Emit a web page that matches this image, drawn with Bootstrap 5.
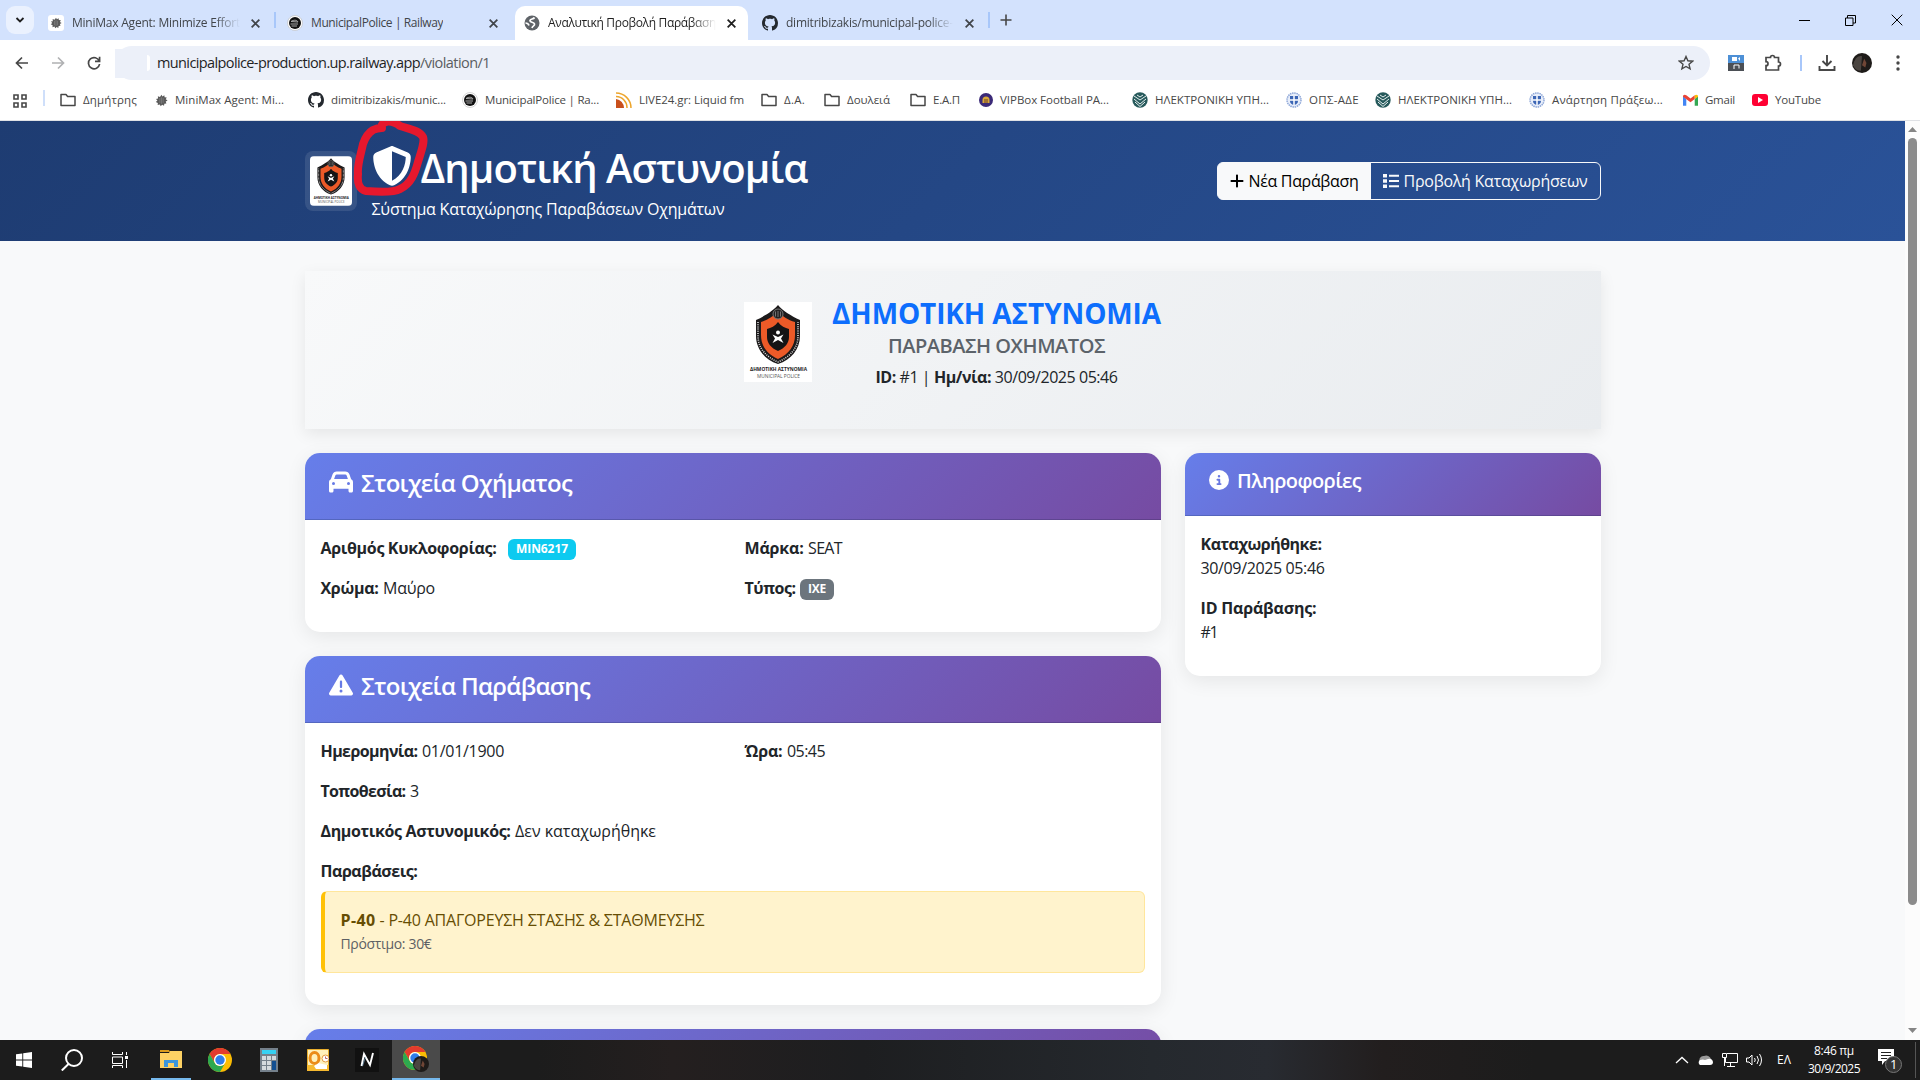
<!DOCTYPE html>
<html lang="el">
<head>
<meta charset="utf-8">
<meta name="viewport" content="width=device-width, initial-scale=1">
<title>Αναλυτική Προβολή Παράβασης</title>
<link href="https://cdn.jsdelivr.net/npm/bootstrap@5.3.0/dist/css/bootstrap.min.css" rel="stylesheet">
<style>
body{font-family:"Open Sans","Noto Sans",sans-serif;width:1920px;height:1080px;overflow:hidden;background:#fff}
svg{flex:none;display:block}
[data-w]{display:inline-block;white-space:nowrap}
/* browser chrome */
.tabstrip{height:40px;background:#d3e2fd;padding-left:6px;font-size:12px;color:#41454a}
.tabmenu{width:28px;height:28px;border-radius:9px;background:#eaf1fe}
.tab-item{height:34px;margin-top:6px;padding-left:9px}
.tab-item .tab-label{overflow:hidden;height:18px;line-height:18px}
.tab-fade{-webkit-mask-image:linear-gradient(90deg,#000 85%,transparent)}
.t1{width:240px;padding-left:14px}.t2{width:239px;padding-left:11px}
.t3{width:233px;background:#fff;border-radius:10px 10px 0 0;color:#1f1f1f}
.t4{width:240px;padding-left:14px}
.tab-x{width:11px;margin-right:11px}.t1 .tab-x,.t4 .tab-x{margin-right:13px}.t2 .tab-x{margin-right:16px}
.tab-sep{width:2px;height:16px;background:#a8c7fa}
.tab-plus{margin-left:10px}
.winbtns{gap:35px;margin-right:17px}
.toolbar{height:46px;color:#474747}
.navbtns{width:115px;padding-left:14px;gap:20px}
.omnibox{width:1595px;height:34px;background:#ecf0f9;border-radius:17px;font-size:14.5px;padding:0 16px 0 42px;color:#1f1f1f}
.omnibox .path-part{color:#5a5d61}
.omni-edge{width:20px;height:29px;background:#ecf0f9;margin-right:-20px}
.omni-mark{width:3px;height:16px;border-radius:0 3px 3px 0;background:#fff;margin:0 7px 0 -10px}
.toolicons{padding-left:18px;width:210px}
.bookmarks{height:34px;padding-top:4px;font-size:11.5px;color:#474747}
.bm{height:20px;gap:7px;line-height:20px}
.bmark-line{height:1px;background:#dfe1e5}
.apps{width:43px;padding-left:13px}
.bm-sep{width:2px;height:16px;background:#cfdffa;margin-right:15px}
.w95{width:95px}.w153{width:153px}.w154{width:154px}.w145{width:145px}.w63{width:63px}.w86{width:86px}.w69{width:69px}.w89{width:89px}
/* page */
.viewport{height:919px;background:#fff}
.page{width:1905px;background:#f8f9fa;overflow:hidden}
.site-header{height:120px;padding:20px 0;background:linear-gradient(135deg,#1e3c72 0%,#2a5298 100%);color:#fff}
.site-header .container,.page .container{max-width:1320px}
.crest-frame{width:52px;height:60px;padding:5px;border-radius:8px;background:rgba(255,255,255,.1);margin-right:15px}
.site-header h1{font-size:40px;line-height:48px;font-weight:650}
.site-header h1>[data-w]{padding-top:3px;height:48px}
.shield-wrap{position:relative;width:40px;height:40px;margin-right:9px}
.shield-wrap svg:first-child{margin-top:1px}
.scribble{position:absolute;left:-22px;top:-29px;overflow:visible}
.site-header .btn{font-size:16px;height:38px;line-height:24px;gap:4px}
.summary{margin-top:30px;height:158px;padding:24px;background:linear-gradient(135deg,#f8f9fa,#e9ecef);box-shadow:0 5px 15px rgba(0,0,0,.08);margin-bottom:24px}
.summary h3{font-size:28px;line-height:33.6px;height:33.6px;padding-top:1.5px}
.summary h5{color:#5c636a;font-weight:600;height:24px;padding-top:1px}
.sheet{border:0;border-radius:15px;box-shadow:0 5px 20px rgba(0,0,0,.08);overflow:hidden;margin-bottom:24px}
.sheet .card-header{background:linear-gradient(135deg,#667eea 0%,#764ba2 100%);color:#fff;padding:15px 24px 14.2px}
.sheet h4,.sheet h5{font-weight:600;line-height:1.2;display:flex;align-items:center;gap:8.500px;margin-bottom:8px}
.sheet h4{font-size:24px;height:28.8px}
.sheet h5{height:24.8px}
.sheet h4 svg{margin-top:-1px}
.sheet h4 [data-w],.sheet h5 [data-w]{padding-top:2px}
.sheet p{height:24px;margin-bottom:16px;display:flex;gap:4.500px}
.sheet .badge{font-size:12px;height:21px;line-height:12px;padding:4.5px 8px;margin-top:3px;border-radius:6px}
.sheet .plate{margin-left:7px}
.fine{border:1px solid #ffe69c;border-left:4px solid #ffc107;background:#fff3cd;color:#664d03;padding:16px;height:82px;border-radius:6px}
.fine small{font-size:14px;color:#5d6064;padding-top:1px}
.scrollrail{width:15px;background:#fcfcfc}
.scrollthumb{width:9px;height:767px;border-radius:5px;background:#8b8b8b}
/* taskbar */
.taskbar{height:40px;color:#fff;background:linear-gradient(90deg,#1c1c1c 0,#1c1c1c 28%,#241f1f 35%,#1d1e20 45%,#25292e 60%,#282b31 66%,#221e1e 72%,#1c1c1c 80%)}
.task{width:48px;height:40px}
.task-slim~.task{margin-right:1px}
.task.running{border-bottom:2px solid #76b9ed}
.task-slim{width:40px;margin:0 5px 0 7px}
.task.active{background:#4a4a4a}
.tray{font-size:12px;gap:8px;padding-right:4px}
.clock{width:62px;line-height:18px;font-size:12px}
.lang{margin-left:6px}
</style>
<script src="https://cdn.jsdelivr.net/npm/bootstrap@5.3.0/dist/js/bootstrap.bundle.min.js"></script>
</head>
<body class="d-flex flex-column">
<svg width="0" height="0" class="position-absolute">
<defs>
<symbol id="x" viewBox="0 0 10 10"><path d="M1.500 1.500l7 7M8.500 1.500l-7 7" stroke="currentColor" stroke-width="1.600"/></symbol>
<symbol id="minimax" viewBox="0 0 16 16"><path d="M8 1l1.200 2L11.500 1.500l.3 2.600 2.700.2-1.300 2.200L15.500 8l-2.300 1.300.8 2.500-2.500.1-.4 2.600-2.300-1.300L7 15l-1-2.200-2.700.7.200-2.500L1 9.700l2-1.600L1.200 6l2.600-.5-.3-2.700 2.600 1z" fill="#5a5a5a"/><path d="M6 5v6M8 4v8M10 5v6" stroke="#888" stroke-width=".8"/></symbol>
<symbol id="railway" viewBox="0 0 16 16"><circle cx="8" cy="8" r="7.500" fill="#fff" stroke="#bbb" stroke-width=".6"/><circle cx="8" cy="8" r="6" fill="#111"/><path d="M4 6.500c3-2 6-1.500 7 .5zM3.500 9H11M4.500 11H10" stroke="#aaa" stroke-width="1" fill="none"/></symbol>
<symbol id="github" viewBox="0 0 16 16"><path fill="#24292f" d="M8 0C3.580 0 0 3.580 0 8c0 3.540 2.290 6.530 5.470 7.590.4.070.55-.17.55-.38 0-.19-.01-.82-.01-1.490-2.010.37-2.530-.49-2.690-.94-.09-.23-.48-.94-.82-1.130-.28-.15-.68-.52-.01-.53.63-.01 1.080.58 1.230.82.72 1.210 1.870.87 2.330.66.070-.52.28-.87.510-1.070-1.780-.2-3.640-.89-3.640-3.950 0-.87.310-1.590.82-2.150-.08-.2-.36-1.020.08-2.120 0 0 .67-.21 2.200.82.64-.18 1.320-.27 2-.27s1.360.090 2 .27c1.530-1.040 2.200-.82 2.200-.82.44 1.100.16 1.920.08 2.120.51.56.82 1.270.82 2.150 0 3.070-1.870 3.750-3.650 3.950.29.25.54.73.54 1.480 0 1.070-.01 1.930-.01 2.200 0 .21.150.46.550.38A8.010 8.010 0 0 0 16 8c0-4.420-3.580-8-8-8z"/></symbol>
<symbol id="folder" viewBox="0 0 16 16"><path d="M1 13.500V2.500h5l1.600 2H15v9z" fill="none" stroke="#474747" stroke-width="1.500" stroke-linejoin="round"/></symbol>
<symbol id="hlek" viewBox="0 0 16 16"><circle cx="8" cy="8" r="7.700" fill="#275a5c"/><path d="M2 4l6 4 6-4M2 7l6 5 6-5M3 10l5 4.500L13 10M5 3l3 2 3-2" stroke="#e6efef" stroke-width="1" fill="none"/></symbol>
<symbol id="greece" viewBox="0 0 16 16"><circle cx="8" cy="8" r="7" fill="#e8eefa" stroke="#8ea7d8" stroke-width="1.500" stroke-dasharray="1.500 .7"/><path d="M4 4h8v5q0 3-4 4-4-1-4-4z" fill="#3c66b5"/><path d="M8 4v9M4 8h8" stroke="#fff" stroke-width="1.500"/></symbol>
<symbol id="crest" viewBox="0 0 68 80"><path fill="#fff" d="M0 0h68v80H0z"/><path d="M34 3C38 8 47 14 56 18V34C56 47 47 58 34 62 21 58 12 47 12 34V18C21 14 30 8 34 3z" fill="#1c1a1b"/><path d="M14 20v14c0 12 8 21 20 26 12-5 20-14 20-26V20" fill="none" stroke="#ddd" stroke-width="1.600" stroke-dasharray="1 1.200"/><path d="M34 9c4 5 10 9 17 11v13c0 11-6 19-17 24-11-5-17-13-17-24V20c7-2 13-6 17-11z" fill="#ec5a28"/><circle cx="34" cy="12" r="5" fill="#222" stroke="#777"/><path d="M31.500 9.500v5M34 9v6M36.500 9.500v5" stroke="#888" stroke-width=".8"/><path d="M34 20c3 4 7 6 11 7v8c0 6-4 11-11 14-7-3-11-8-11-14v-8c4-1 8-3 11-7z" fill="#151415"/><circle cx="34" cy="30.500" r="2" fill="#fff"/><path d="M28.500 32.500L34 35l5.500-2.500-2.500 4 2.500 4.500L34 38l-5.500 3 2.500-4.500z" fill="#fff"/><text x="6" y="69" font-size="5.300" font-weight="700" textLength="57" lengthAdjust="spacingAndGlyphs" fill="#222">ΔΗΜΟΤΙΚΗ ΑΣΤΥΝΟΜΙΑ</text><text x="13" y="75.800" font-size="5" textLength="43" lengthAdjust="spacingAndGlyphs" fill="#555">MUNICIPAL POLICE</text></symbol>
<symbol id="chrome" viewBox="0 0 24 24"><circle cx="12" cy="12" r="12" fill="#fbbc04"/><path d="M1.600 6A12 12 0 0 1 22.400 6H12a6 6 0 0 0-5.200 9z" fill="#e33b2e"/><path d="M1.600 6A12 12 0 0 0 12 24l5.200-9A6 6 0 0 1 6.800 15z" fill="#2da94f"/><circle cx="12" cy="12" r="6" fill="#fff"/><circle cx="12" cy="12" r="4.700" fill="#2f7de9"/></symbol>
<symbol id="avatar" viewBox="0 0 18 18"><circle cx="9" cy="9" r="9" fill="#1e1b19"/><path d="M1 11C2 5 6 2 9 3L8 16Q3 16 1 11z" fill="#4b4541"/><path d="M11 5l2 4-1 4-3-2z" fill="#704636"/></symbol>
</defs></svg>

<div class="tabstrip d-flex flex-shrink-0">
  <div class="tabmenu d-flex align-items-center justify-content-center align-self-center"><svg width="10" height="8" viewBox="0 0 10 8"><path d="M1.500 2L5 5.500 8.500 2" fill="none" stroke="#1f1f1f" stroke-width="1.800"/></svg></div>
  <div class="tab-item t1 d-flex align-items-center"><svg width="16" height="16"><rect width="16" height="16" rx="3" fill="#fff"/><use href="#minimax" x="2" y="2" width="12" height="12"/></svg><div class="tab-label tab-fade ms-2"><span data-w="168">MiniMax Agent: Minimize Effort</span></div><svg class="tab-x ms-auto" height="11"><use href="#x"/></svg></div>
  <div class="tab-sep align-self-center"></div>
  <div class="tab-item t2 d-flex align-items-center"><svg width="16" height="16"><use href="#railway"/></svg><div class="tab-label ms-2"><span data-w="132">MunicipalPolice | Railway</span></div><svg class="tab-x ms-auto" height="11"><use href="#x"/></svg></div>
  <div class="tab-item t3 d-flex align-items-center"><svg width="16" height="16" viewBox="0 0 16 16"><circle cx="8" cy="8" r="7.500" fill="#5f6368"/><path d="M10.500 2.500c-1 2-4 1-4.500 3s4 1.500 4.500 3.500-2 1.500-2.500 4M1.500 8c2 0 3 1 3.500 2.500" stroke="#fff" stroke-width="1.700" fill="none"/></svg><div class="tab-label tab-fade ms-2"><span data-w="168">Αναλυτική Προβολή Παράβαση</span></div><svg class="tab-x ms-auto" height="11"><use href="#x"/></svg></div>
  <div class="tab-item t4 d-flex align-items-center"><svg width="16" height="16"><use href="#github"/></svg><div class="tab-label tab-fade ms-2"><span data-w="167">dimitribizakis/municipal-police-</span></div><svg class="tab-x ms-auto" height="11"><use href="#x"/></svg></div>
  <div class="tab-sep align-self-center"></div>
  <svg class="tab-plus align-self-center" width="12" height="12" viewBox="0 0 12 12"><path d="M6 .5v11M.5 6h11" stroke="#474747" stroke-width="1.600"/></svg>
  <div class="winbtns d-flex align-items-center ms-auto">
    <svg width="11" height="11"><path d="M0 5.500h11" stroke="#000"/></svg>
    <svg width="11" height="11"><path d="M.5 3h7.500v7.500H.5zM2.500 3V.5h8V8H8" fill="none" stroke="#000"/></svg>
    <svg width="12" height="12"><path d="M.7.7l10.600 10.600M11.300.7L.7 11.300" stroke="#000"/></svg>
  </div>
</div>

<div class="toolbar d-flex align-items-center flex-shrink-0">
  <div class="navbtns d-flex align-items-center">
    <svg width="16" height="16" viewBox="0 0 16 16" fill="none" stroke="#474747" stroke-width="1.700"><path d="M14 8H2.500M8 2.500L2.500 8 8 13.500"/></svg>
    <svg width="16" height="16" viewBox="0 0 16 16" fill="none" stroke="#b0b1b3" stroke-width="1.700"><path d="M2 8h11.500M8 2.500L13.500 8 8 13.500"/></svg>
    <svg width="16" height="16" viewBox="0 0 16 16" fill="none" stroke="#474747" stroke-width="1.700"><path d="M13.300 6.200A5.600 5.600 0 1 0 13.600 9M13.600 1.800v4.600H9"/></svg>
  </div>
  <div class="omni-edge"></div>
  <div class="omnibox d-flex align-items-center"><i class="omni-mark"></i><span data-w="263">municipalpolice-production.up.railway.app</span><span class="path-part" data-w="70">/violation/1</span>
    <svg class="ms-auto" width="16" height="16" viewBox="0 0 16 16"><path d="M8 1.500l1.900 4.300 4.700.4-3.600 3.100 1.100 4.600L8 11.500l-4.100 2.400L5 9.300 1.400 6.200l4.700-.4z" fill="none" stroke="#474747" stroke-width="1.400"/></svg></div>
  <div class="toolicons d-flex align-items-center">
    <svg width="16" height="16"><path fill="#4d90d6" d="M0 0h16v8H0z"/><path fill="#4b4f55" d="M0 8h16v8H0z"/><path d="M4 2h5v4H4zM10 3.500L12 2v4z" fill="#fff"/><path d="M6 14v-4h5v3.500" stroke="#fff" fill="none"/></svg>
    <svg class="ms-3" width="24" height="18" viewBox="0 0 24 18"><path d="M6 3.500h4.500a2 2 0 0 1 4 0h4V8a2 2 0 0 1 0 4v4H6v-4.300a2 2 0 0 0 0-4z" fill="none" stroke="#474747" stroke-width="1.700"/></svg>
    <div class="tab-sep ms-3"></div>
    <svg class="ms-3" width="18" height="18" viewBox="0 0 18 18"><path d="M9 1v10M4.500 7L9 11.500 13.500 7M1.500 12v4h15v-4" fill="none" stroke="#474747" stroke-width="1.900"/></svg>
    <svg class="ms-3" width="20" height="20"><use href="#avatar"/></svg>
    <svg class="ms-auto me-3" width="12" height="16"><g fill="#474747"><circle cx="6" cy="2" r="1.700"/><circle cx="6" cy="8" r="1.700"/><circle cx="6" cy="14" r="1.700"/></g></svg>
  </div>
</div>

<div class="bookmarks d-flex align-items-start flex-shrink-0">
  <div class="apps"><svg class="mt-1" width="14" height="14" viewBox="0 0 14 14"><path d="M1 1h4v4H1zM9 1h4v4H9zM1 9h4v4H1zM9 9h4v4H9z" fill="none" stroke="#474747" stroke-width="1.600"/></svg></div>
  <div class="bm-sep"></div>
  <div class="bm w95 d-flex align-items-center"><svg width="16" height="16"><use href="#folder"/></svg><span data-w="54">Δημήτρης</span></div>
  <div class="bm w153 d-flex align-items-center"><svg width="13" height="13"><use href="#minimax"/></svg><span data-w="109">MiniMax Agent: Mi...</span></div>
  <div class="bm w154 d-flex align-items-center"><svg width="16" height="16"><use href="#github"/></svg><span data-w="115">dimitribizakis/munic...</span></div>
  <div class="bm w154 d-flex align-items-center"><svg width="16" height="16"><use href="#railway"/></svg><span data-w="114">MunicipalPolice | Ra...</span></div>
  <div class="bm w145 d-flex align-items-center"><svg width="16" height="16" viewBox="0 0 16 16"><path d="M0 7a9 9 0 0 1 8 9H0z" fill="#c9501c"/><path d="M0 4.500A11 11 0 0 1 11 16M0 1a15 15 0 0 1 15 15" stroke="#eda52c" stroke-width="1.500" fill="none"/></svg><span data-w="105">LIVE24.gr: Liquid fm</span></div>
  <div class="bm w63 d-flex align-items-center"><svg width="16" height="16"><use href="#folder"/></svg><span data-w="21">Δ.Α.</span></div>
  <div class="bm w86 d-flex align-items-center"><svg width="16" height="16"><use href="#folder"/></svg><span data-w="43">Δουλειά</span></div>
  <div class="bm w69 d-flex align-items-center"><svg width="16" height="16"><use href="#folder"/></svg><span data-w="27">Ε.Α.Π</span></div>
  <div class="bm w153 d-flex align-items-center"><svg width="14" height="14" viewBox="0 0 14 14"><circle cx="7" cy="7" r="7" fill="#3b2a78"/><path d="M3.500 7a3.500 3.500 0 0 1 7 0v3h-7z" fill="#d9a93a"/><path d="M5 7h4M5 9h4" stroke="#6b3b2b"/></svg><span data-w="109">VIPBox Football PA...</span></div>
  <div class="bm w154 d-flex align-items-center"><svg width="16" height="16"><use href="#hlek"/></svg><span data-w="114">ΗΛΕΚΤΡΟΝΙΚΗ ΥΠΗ...</span></div>
  <div class="bm w89 d-flex align-items-center"><svg width="16" height="16"><use href="#greece"/></svg><span data-w="50">ΟΠΣ-ΑΔΕ</span></div>
  <div class="bm w154 d-flex align-items-center"><svg width="16" height="16"><use href="#hlek"/></svg><span data-w="114">ΗΛΕΚΤΡΟΝΙΚΗ ΥΠΗ...</span></div>
  <div class="bm w154 d-flex align-items-center"><svg width="16" height="16"><use href="#greece"/></svg><span data-w="111">Ανάρτηση Πράξεω...</span></div>
  <div class="bm w69 d-flex align-items-center"><svg width="15" height="12" viewBox="0 0 16 12"><path d="M0 1.500V12h3.500V5z" fill="#4285f4"/><path d="M16 1.500V12h-3.500V5z" fill="#34a853"/><path d="M0 1.500Q1.500-.5 3.500 1L8 4.500 12.500 1v4L8 8.500 0 2.500z" fill="#ea4335"/><path d="M12.500 1Q14.500-.5 16 1.500v1L12.500 5z" fill="#fbbc04"/></svg><span data-w="30">Gmail</span></div>
  <div class="bm d-flex align-items-center"><svg width="16" height="12"><rect width="16" height="12" rx="3" fill="#f03"/><path d="M6 3l5 3-5 3z" fill="#fff"/></svg><span data-w="46">YouTube</span></div>
</div>
<div class="bmark-line flex-shrink-0"></div>

<div class="viewport d-flex flex-shrink-0">
  <div class="page">
    <header class="site-header">
      <div class="container d-flex align-items-center justify-content-between">
        <div class="d-flex align-items-center">
          <div class="crest-frame"><svg class="rounded-1" width="42" height="50"><use href="#crest"/></svg></div>
          <div>
            <h1 class="d-flex align-items-center mb-2"><span class="shield-wrap"><svg width="40" height="40" viewBox="0 0 512 512" fill="#fff"><path d="M256 0c4.600 0 9.200 1 13.400 2.900L457.700 82.800c22 9.300 38.400 31 38.300 57.200c-.5 99.200-41.300 280.700-213.600 363.200c-16.700 8-36.100 8-52.800 0C57.300 420.700 16.500 239.200 16 140c-.1-26.200 16.300-47.900 38.300-57.200L242.700 2.900C246.800 1 251.400 0 256 0zm0 66.800V444.800C394 378 431.100 230.100 432 141.400L256 66.800z"/></svg><svg class="scribble" width="80" height="82" viewBox="0 0 80 82"><path d="M32 12C29 12 25 13 23 14 18 17 15 22 13 28 11 38 7 49 8 58 7 68 10 74 16 75 28 76 43 77 50 73 61 68 65 57 68 46 71 36 75 26 73 21 69 14 59 13 50 10 42 4 33 4 31 11" fill="none" stroke="#e6182d" stroke-width="8" stroke-linecap="round" stroke-linejoin="round"/></svg></span><span data-w="387">Δημοτική Αστυνομία</span></h1>
            <p class="mb-0"><span data-w="353">Σύστημα Καταχώρησης Παραβάσεων Οχημάτων</span></p>
          </div>
        </div>
        <div class="btn-group">
          <a class="btn btn-light d-flex align-items-center" href="#"><svg width="14" height="16" viewBox="0 0 448 512" fill="currentColor"><path d="M256 80c0-17.700-14.300-32-32-32s-32 14.300-32 32V224H48c-17.700 0-32 14.300-32 32s14.300 32 32 32H192V432c0 17.700 14.300 32 32 32s32-14.300 32-32V288H400c17.700 0 32-14.300 32-32s-14.300-32-32-32H256V80z"/></svg><span data-w="110">Νέα Παράβαση</span></a>
          <a class="btn btn-outline-light d-flex align-items-center" href="#"><svg width="16" height="16" viewBox="0 0 16 16" fill="currentColor"><path d="M0 1h4v3.500H0zM0 6.300h4v3.500H0zM0 11.600h4V15H0zM6 1.800h10v2H6zM6 7h10v2H6zM6 12.300h10v2H6z"/></svg><span data-w="184">Προβολή Καταχωρήσεων</span></a>
        </div>
      </div>
    </header>

    <main class="container">
      <section class="summary d-flex justify-content-center align-items-start">
        <div class="d-flex align-items-center">
          <svg width="68" height="80"><use href="#crest"/></svg>
          <div class="text-center ps-1 ms-3">
            <h3 class="text-primary fw-bold mb-1"><span data-w="329">ΔΗΜΟΤΙΚΗ ΑΣΤΥΝΟΜΙΑ</span></h3>
            <h5 class="mb-2"><span data-w="217">ΠΑΡΑΒΑΣΗ ΟΧΗΜΑΤΟΣ</span></h5>
            <p class="mb-0"><span data-w="242"><strong>ID:</strong> #1 | <strong>Ημ/νία:</strong> 30/09/2025 05:46</span></p>
          </div>
        </div>
      </section>

      <div class="row">
        <div class="col-8">
          <div class="card sheet">
            <div class="card-header"><h4><svg width="24" height="24" viewBox="0 0 512 512" fill="#fff"><path d="M135.200 117.400L109.100 192H402.900l-26.100-74.600C372.300 104.600 360.200 96 346.600 96H165.400c-13.600 0-25.700 8.600-30.200 21.400zM39.600 196.800L74.800 96.300C88.300 57.800 124.600 32 165.400 32H346.600c40.800 0 77.100 25.800 90.600 64.300l35.200 100.500c23.200 9.600 39.600 32.500 39.600 59.200V400v48c0 17.700-14.300 32-32 32H448c-17.700 0-32-14.300-32-32V400H96v48c0 17.700-14.300 32-32 32H32c-17.700 0-32-14.300-32-32V400 256c0-26.700 16.400-49.600 39.600-59.200zM128 288a32 32 0 1 0 -64 0 32 32 0 1 0 64 0zm288 32a32 32 0 1 0 0-64 32 32 0 1 0 0 64z"/></svg><span data-w="211">Στοιχεία Οχήματος</span></h4></div>
            <div class="card-body">
              <div class="row">
                <div class="col-6"><p><strong data-w="176">Αριθμός Κυκλοφορίας:</strong><span class="badge bg-info plate"><span data-w="52">MIN6217</span></span></p><p><strong data-w="58">Χρώμα:</strong><span data-w="52">Μαύρο</span></p></div>
                <div class="col-6"><p><strong data-w="59">Μάρκα:</strong><span data-w="34">SEAT</span></p><p><strong data-w="51">Τύπος:</strong><span class="badge bg-secondary"><span data-w="18">ΙΧΕ</span></span></p></div>
              </div>
            </div>
          </div>

          <div class="card sheet">
            <div class="card-header"><h4><svg width="24" height="24" viewBox="0 0 512 512" fill="#fff"><path d="M256 32c14.200 0 27.300 7.500 34.500 19.800l216 368c7.300 12.400 7.300 27.700 .2 40.100S486.300 480 472 480H40c-14.300 0-27.600-7.700-34.700-20.100s-7-27.800 .2-40.100l216-368C228.700 39.500 241.800 32 256 32zm0 128c-13.300 0-24 10.700-24 24V296c0 13.300 10.700 24 24 24s24-10.700 24-24V184c0-13.300-10.700-24-24-24zm32 224a32 32 0 1 0 -64 0 32 32 0 1 0 64 0z"/></svg><span data-w="229">Στοιχεία Παράβασης</span></h4></div>
            <div class="card-body">
              <div class="row">
                <div class="col-6"><p><strong data-w="97">Ημερομηνία:</strong><span data-w="82">01/01/1900</span></p></div>
                <div class="col-6"><p><strong data-w="38">Ώρα:</strong><span data-w="38">05:45</span></p></div>
              </div>
              <p><strong data-w="85">Τοποθεσία:</strong><span>3</span></p>
              <p><strong data-w="190">Δημοτικός Αστυνομικός:</strong><span data-w="141">Δεν καταχωρήθηκε</span></p>
              <p class="mb-2"><strong data-w="97">Παραβάσεις:</strong></p>
              <div class="fine mb-3">
                <div class="d-flex gap-1"><strong data-w="35">P-40</strong><span data-w="325">- P-40 ΑΠΑΓΟΡΕΥΣΗ ΣΤΑΣΗΣ &amp; ΣΤΑΘΜΕΥΣΗΣ</span></div>
                <small class="d-block"><span data-w="91">Πρόστιμο: 30€</span></small>
              </div>
            </div>
          </div>

          <div class="card sheet"><div class="card-header"><h4>&nbsp;</h4></div></div>
        </div>

        <div class="col-4">
          <div class="card sheet">
            <div class="card-header"><h5><svg width="20" height="20" viewBox="0 0 512 512" fill="#fff"><path d="M256 512A256 256 0 1 0 256 0a256 256 0 1 0 0 512zM216 336h24V272H216c-13.300 0-24-10.700-24-24s10.700-24 24-24h48c13.300 0 24 10.700 24 24v88h8c13.300 0 24 10.700 24 24s-10.700 24-24 24H216c-13.300 0-24-10.700-24-24s10.700-24 24-24zm40-208a32 32 0 1 1 0 64 32 32 0 1 1 0-64z"/></svg><span data-w="124">Πληροφορίες</span></h5></div>
            <div class="card-body">
              <p class="mb-0"><strong data-w="121">Καταχωρήθηκε:</strong></p>
              <p><span data-w="124">30/09/2025 05:46</span></p>
              <p class="mb-0"><strong data-w="116">ID Παράβασης:</strong></p>
              <p><span data-w="17">#1</span></p>
            </div>
          </div>
        </div>
      </div>
    </main>
  </div>
  <div class="scrollrail d-flex flex-column align-items-center">
    <svg width="9" height="17"><path d="M0 11h9L4.500 6z" fill="#858585"/></svg>
    <div class="scrollthumb"></div>
    <svg class="mt-auto" width="9" height="14"><path d="M0 2h9L4.500 7z" fill="#858585"/></svg>
  </div>
</div>

<footer class="taskbar d-flex align-items-center flex-shrink-0">
  <div class="task d-flex align-items-center justify-content-center"><svg width="16" height="16" viewBox="0 0 16 16" fill="#fff"><path d="M0 2.200L6.300 1.400V7.500H0zM7.200 1.200L16 0v7.500H7.200zM0 8.500h6.300v6.100L0 13.800zM7.200 8.500H16V16l-8.800-1.200z"/></svg></div>
  <div class="task d-flex align-items-center justify-content-center"><svg width="22" height="22" viewBox="0 0 22 22" fill="none" stroke="#fff" stroke-width="2"><circle cx="13" cy="9" r="8"/><path d="M7.500 15L.8 21.500"/></svg></div>
  <div class="task d-flex align-items-center justify-content-center"><svg width="16" height="16" viewBox="0 0 16 16" fill="none" stroke="#fff"><path d="M.5 0v2.500h10V0M.5 5h10v6.500H.5zM.5 16v-2.500h10V16M14.500 0v3M14.500 8v8"/><path d="M13 4h3v3h-3z" fill="#fff" stroke="none"/></svg></div>
  <div class="task task-slim running d-flex align-items-center justify-content-center"><svg width="22" height="18" viewBox="0 0 22 18"><path d="M0 0h9l1 2H0z" fill="#d99b1d"/><path d="M0 3h9l1-2h12v17H0z" fill="#fdd264"/><path d="M4 17v-7h14v7h-4v-4H8v4z" fill="#3c96dc"/></svg></div>
  <div class="task d-flex align-items-center justify-content-center"><svg width="24" height="24"><use href="#chrome"/></svg></div>
  <div class="task d-flex align-items-center justify-content-center"><svg width="18" height="24" viewBox="0 0 18 24"><path fill="#74808b" d="M0 0h18v24H0z"/><path fill="#36d1f3" d="M2 2h14v4H2z"/><path fill="#d4dade" d="M2 8h4v4H2zM7 8h4v4H7zM12 8h4v4h-4zM2 13h4v4H2zM7 13h4v4H7zM2 18h4v4H2zM7 18h4v4H7z"/><path fill="#134f91" d="M12 13h4v9h-4z"/></svg></div>
  <div class="task d-flex align-items-center justify-content-center"><svg width="22" height="22" viewBox="0 0 22 22"><path fill="#fff0ba" stroke="#e9ae2d" d="M.5.5h21v21H.5z"/><path d="M0 16h22v6H0z" fill="#f6b92f"/><path d="M7 17l4-3 9 2v4H9z" fill="#fff"/><ellipse cx="7.500" cy="9" rx="4.500" ry="5.500" fill="none" stroke="#eb8c18" stroke-width="3"/><circle cx="18.500" cy="9.500" r="3.500" fill="#fff" stroke="#e59a3c"/><path d="M18.500 7.500v2h2" stroke="#b66" fill="none"/></svg></div>
  <div class="task d-flex align-items-center justify-content-center"><svg width="24" height="24" viewBox="0 0 24 24"><path fill="#111" d="M0 0h24v24H0z"/><path d="M6.500 18L9 6l6 11 3-12" fill="none" stroke="#fff" stroke-width="1.900"/><path d="M7.500 18l3-9" stroke="#8bd" stroke-width=".6"/></svg></div>
  <div class="task running active d-flex align-items-center justify-content-center"><svg width="26" height="26"><use href="#chrome" width="24" height="24"/><use href="#avatar" x="10" y="10" width="16" height="16"/></svg></div>
  <div class="tray d-flex align-items-center ms-auto">
    <svg width="14" height="8"><path d="M1 7l6-5.500L13 7" fill="none" stroke="#fff" stroke-width="1.300"/></svg>
    <svg width="17" height="12" viewBox="0 0 17 12"><path d="M3 8a4 4 0 0 1 4-6 5 5 0 0 1 7 3l-6 3z" fill="#999"/><path d="M3 11a3 3 0 0 1 0-5q3-1 5 0l3-1q4-1 5 3 0 3-3 3z" fill="#fff"/></svg>
    <svg width="16" height="14" viewBox="0 0 16 14" fill="none" stroke="#fff"><path d="M5 .5h10.500v9H3.500V5M8.500 9.500V13M5 13.500h8M.5.500h4v4h-4zM2.500 4v9"/></svg>
    <svg width="17" height="14" viewBox="0 0 17 14" fill="none" stroke="#fff"><path d="M.5 5v4h2.500l3 3V2L3 5zM8.500 5q1.500 2 0 4M11 3q3 4 0 8M13.500 1q4 6 0 12"/></svg>
    <span class="lang" data-w="14">ΕΛ</span>
    <div class="clock text-center ms-1"><div><span data-w="40">8:46 πμ</span></div><div><span data-w="52">30/9/2025</span></div></div>
    <svg class="ms-1" width="26" height="28" viewBox="0 0 26 28"><path d="M1 3h16v12H8l-3 4v-4H1z" fill="#fff"/><path d="M4 6.500h10M4 9.500h10M4 12.500h6" stroke="#222"/><circle cx="16.500" cy="18.500" r="8" fill="#333" stroke="#777"/><text x="13" y="23" font-size="13" fill="#fff">1</text></svg>
    <div class="vr ms-1"></div>
  </div>
</footer>
<script>
/* Tracks each label so it fills its nominal width, whichever fallback font is in use. */
document.fonts.ready.then(function(){
  document.querySelectorAll('[data-w]').forEach(function(el){
    var n=el.textContent.length, w=el.getBoundingClientRect().width, target=+el.dataset.w;
    el.style.letterSpacing=((target-w)/n).toFixed(3)+'px';
  });
});
</script>
</body>
</html>
